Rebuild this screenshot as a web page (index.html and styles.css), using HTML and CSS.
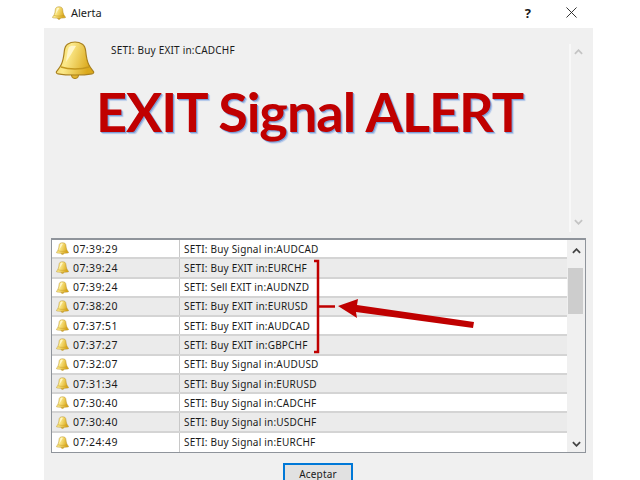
FILE: index.html
```html
<!DOCTYPE html>
<html>
<head>
    <title>Alerta</title>
    <link rel="stylesheet" href="styles.css">
</head>
<body>
    <svg class="defs" width="0" height="0">
        <defs>
            <linearGradient id="bell-fill" x1="0" y1="0" x2="1" y2="0.3">
                <stop offset="0" stop-color="#f3d45a"/>
                <stop offset="0.4" stop-color="#fbe98a"/>
                <stop offset="1" stop-color="#dba91c"/>
            </linearGradient>
            <symbol id="bell" viewBox="0 0 40 40">
                <circle cx="20" cy="35" r="3.6" fill="#e2b431" stroke="#a9811f" stroke-width="1"/>
                <path d="M20 2c-3 0-5 .6-7.500 2.200-2 1.400-2.800 3.500-3.200 7-.5 5-1.200 9.500-3 13.300C5 27.500 2.800 29.800 1.500 31.500c-.6 1 .2 2.200 1.500 2.300 5 .9 11 1.200 17 1.200s12-.3 17-1.200c1.300-.1 2.100-1.300 1.500-2.300-1.300-1.700-3.500-4-4.800-7-1.800-3.800-2.500-8.300-3-13.300-.4-3.500-1.200-5.600-3.200-7C25 2.600 23 2 20 2z" fill="url(#bell-fill)" stroke="#a9811f" stroke-width="1.200"/>
                <path d="M6 27c8 2.500 20 2.500 28 0" fill="none" stroke="#c4981f" stroke-width="1.500"/>
                <path d="M14 7c-1.500 3-2 9-3 15 3-4 7-11 10-16-3-.5-5.500-.2-7 1z" fill="#fff6c8"/>
            </symbol>
        </defs>
    </svg>

    <div class="titlebar">
        <svg class="bell-small"><use href="#bell"/></svg>
        <span class="title">Alerta</span>
        <span class="help">?</span>
        <svg class="close" viewBox="0 0 12 12"><path d="M.5.5l11 11M11.500.5l-11 11" fill="none" stroke="#222" stroke-width="1"/></svg>
    </div>

    <div class="panel">
        <div class="message">
            <div class="message-main">
                <div class="message-top">
                    <svg class="bell-large"><use href="#bell"/></svg>
                    <span class="message-text">SETI: Buy EXIT in:CADCHF</span>
                </div>
                <div class="banner">EXIT Signal ALERT</div>
            </div>
            <div class="message-scroll">
                <svg class="chev" viewBox="0 0 10 6"><path d="M1 5l4-4 4 4" fill="none" stroke="#c4c4c4" stroke-width="2"/></svg>
                <svg class="chev" viewBox="0 0 10 6"><path d="M1 1l4 4 4-4" fill="none" stroke="#c4c4c4" stroke-width="2"/></svg>
            </div>
        </div>

        <div class="list">
            <div class="rows">
                <div class="row"><div class="cell-time"><svg class="bell-row"><use href="#bell"/></svg>07:39:29</div><div class="cell-msg">SETI: Buy Signal in:AUDCAD</div></div>
                <div class="row"><div class="cell-time"><svg class="bell-row"><use href="#bell"/></svg>07:39:24</div><div class="cell-msg">SETI: Buy EXIT in:EURCHF</div></div>
                <div class="row"><div class="cell-time"><svg class="bell-row"><use href="#bell"/></svg>07:39:24</div><div class="cell-msg">SETI: Sell EXIT in:AUDNZD</div></div>
                <div class="row"><div class="cell-time"><svg class="bell-row"><use href="#bell"/></svg>07:38:20</div><div class="cell-msg">SETI: Buy EXIT in:EURUSD</div></div>
                <div class="row"><div class="cell-time"><svg class="bell-row"><use href="#bell"/></svg>07:37:51</div><div class="cell-msg">SETI: Buy EXIT in:AUDCAD</div></div>
                <div class="row"><div class="cell-time"><svg class="bell-row"><use href="#bell"/></svg>07:37:27</div><div class="cell-msg">SETI: Buy EXIT in:GBPCHF</div></div>
                <div class="row"><div class="cell-time"><svg class="bell-row"><use href="#bell"/></svg>07:32:07</div><div class="cell-msg">SETI: Buy Signal in:AUDUSD</div></div>
                <div class="row"><div class="cell-time"><svg class="bell-row"><use href="#bell"/></svg>07:31:34</div><div class="cell-msg">SETI: Buy Signal in:EURUSD</div></div>
                <div class="row"><div class="cell-time"><svg class="bell-row"><use href="#bell"/></svg>07:30:40</div><div class="cell-msg">SETI: Buy Signal in:CADCHF</div></div>
                <div class="row"><div class="cell-time"><svg class="bell-row"><use href="#bell"/></svg>07:30:40</div><div class="cell-msg">SETI: Buy Signal in:USDCHF</div></div>
                <div class="row"><div class="cell-time"><svg class="bell-row"><use href="#bell"/></svg>07:24:49</div><div class="cell-msg">SETI: Buy Signal in:EURCHF</div></div>
            </div>
            <div class="scrollbar">
                <svg class="chev" viewBox="0 0 10 6"><path d="M1 5l4-4 4 4" fill="none" stroke="#444" stroke-width="2"/></svg>
                <div class="track"><div class="thumb"></div></div>
                <svg class="chev" viewBox="0 0 10 6"><path d="M1 1l4 4 4-4" fill="none" stroke="#444" stroke-width="2"/></svg>
            </div>
        </div>

        <div class="actions">
            <button class="btn">Aceptar</button>
        </div>
    </div>

    <!-- red bracket and arrow drawn over the list -->
    <svg class="markup" viewBox="0 0 640 480">
        <path d="M314 261h4v91h-4" fill="none" stroke="#bf0000" stroke-width="2.500"/>
        <path d="M319 306.500h16" fill="none" stroke="#bf0000" stroke-width="2.500"/>
        <path d="M338 306l20-7-1 6 117 17-1 6-117-16 1 6z" fill="#bf0000"/>
    </svg>
</body>
</html>
```

FILE: styles.css
```css
html, body {
    margin: 0;
    height: 480px;
    overflow: hidden;
}
body {
    position: relative;
    background-color: #fff;
    font-family: "Noto Sans", Arial, sans-serif;
    font-size: 10px;
    letter-spacing: .2px;
    color: #1a1a1a;
}
.defs {
    position: absolute;
}
.bell-small {
    width: 14px;
    height: 14px;
    flex: none;
}
.bell-row {
    width: 13px;
    height: 13px;
    flex: none;
}
/* Title bar */
.titlebar {
    height: 28px;
    display: flex;
    align-items: center;
    padding: 0 0 3px 52px;
    box-sizing: border-box;
}
.title {
    margin-left: 5px;
    font-size: 11px;
    letter-spacing: 0;
}
.help {
    margin-left: 423px;
    font-size: 13px;
    font-weight: bold;
    width: 8px;
}
.close {
    margin-left: 33px;
    width: 11px;
    height: 11px;
}
/* Main panel */
.panel {
    margin-left: 44px;
    width: 549px;
    height: 452px;
    background-color: #f0f0f0;
    display: flex;
    flex-direction: column;
}
.message {
    flex: none;
    height: 210px;
    display: flex;
    padding-top: 12px;
    box-sizing: border-box;
}
.message-main {
    flex: 1;
}
.message-top {
    display: flex;
    align-items: flex-start;
    padding-left: 11px;
}
.bell-large {
    width: 40px;
    height: 40px;
    flex: none;
}
.message-text {
    margin-left: 16px;
    margin-top: 3px;
}
.banner {
    margin-top: 2px;
    padding-left: 52px;
    font-family: Lato, Arial, sans-serif;
    font-weight: 700;
    font-size: 54px;
    line-height: 60px;
    letter-spacing: -1px;
    color: #c00000;
    white-space: nowrap;
    text-shadow: 1px 1px 0 #7d9ed4, 2px 2px 1px #b0c6ea;
}
.message-scroll {
    width: 24px;
    margin-top: 4px;
    height: 188px;
    border-left: 2px solid #f8f8f8;
    box-sizing: border-box;
    display: flex;
    flex-direction: column;
    justify-content: space-between;
    align-items: flex-start;
    padding: 5px 0 7px 3px;
}
.chev {
    width: 9px;
    height: 6px;
    flex: none;
}
/* List */
.list {
    flex: none;
    margin-left: 7px;
    width: 535px;
    height: 215px;
    box-sizing: border-box;
    border: 1px solid #8f949b;
    border-top-width: 2px;
    background-color: #fff;
    display: flex;
}
.rows {
    flex: 1;
    display: grid;
    grid-template-rows: repeat(11, 1fr);
}
.row {
    display: flex;
    align-items: center;
    border-bottom: 2px solid #d4d4d4;
    box-sizing: border-box;
}
.row:nth-child(even) {
    background-color: #ebebeb;
}
.row:last-child {
    border-bottom: 0;
}
.cell-time {
    width: 128px;
    height: 100%;
    box-sizing: border-box;
    padding-left: 4px;
    display: flex;
    align-items: center;
    gap: 4px;
    font-size: 10.500px;
    letter-spacing: .4px;
    border-right: 1px solid #c8c8c8;
}
.cell-msg {
    padding-left: 4px;
}
.scrollbar {
    width: 18px;
    background-color: #f0f0f0;
    display: flex;
    flex-direction: column;
    align-items: center;
    padding: 8px 0 5px;
    box-sizing: border-box;
}
.track {
    flex: 1;
    width: 100%;
    padding-top: 14px;
}
.thumb {
    height: 46px;
    margin: 0 2px 0 1px;
    background-color: #cdcdcd;
}
/* Footer */
.actions {
    flex: none;
    display: flex;
    justify-content: center;
    padding-top: 10px;
}
.btn {
    width: 70px;
    height: 24px;
    margin-left: -1px;
    border: 2px solid #0078d7;
    background-color: #e1e1e1;
    font-family: "Noto Sans", Arial, sans-serif;
    font-size: 10px;
    letter-spacing: .2px;
    color: #1a1a1a;
    padding: 0 0 3px;
}
/* Markup overlay */
.markup {
    position: absolute;
    left: 0;
    top: 0;
    width: 640px;
    height: 480px;
    pointer-events: none;
}
```
